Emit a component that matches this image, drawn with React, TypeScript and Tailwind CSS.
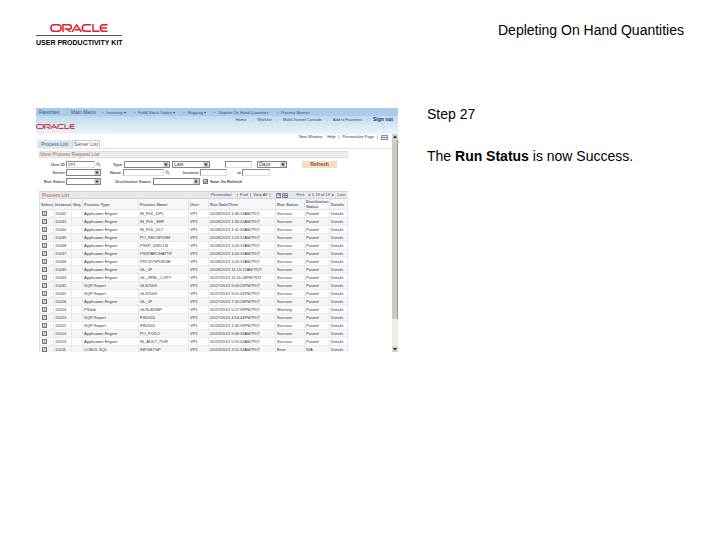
import React from 'react';

type Row = [string, string, string, string, string, string];

const AE = 'Application Engine';

const rows: Row[] = [
  ['15042', AE, 'IN_FUL_DPL', '05/28/2013 1:46:14AM PDT', 'Success', 'Posted'],
  ['15041', AE, 'IN_FUL_SHP', '05/28/2013 1:36:55AM PDT', 'Success', 'Posted'],
  ['15040', AE, 'IN_FUL_DLT', '05/28/2013 1:31:33AM PDT', 'Success', 'Posted'],
  ['15039', AE, 'PO_RECVPUSH', '05/28/2013 1:05:57AM PDT', 'Success', 'Posted'],
  ['15038', AE, 'PSXP_DIRCLN', '05/28/2013 1:00:19AM PDT', 'Success', 'Posted'],
  ['15037', AE, 'PSXPARCHATTR', '05/28/2013 1:00:19AM PDT', 'Success', 'Posted'],
  ['15036', AE, 'PRCSYSPURGE', '05/28/2013 1:00:19AM PDT', 'Success', 'Posted'],
  ['15035', AE, 'GL_JP', '05/28/2013 12:15:12AM PDT', 'Success', 'Posted'],
  ['15033', AE, 'GL_JRNL_COPY', '05/27/2013 11:15:18PM PDT', 'Success', 'Posted'],
  ['15032', 'SQR Report', 'GLS7009', '05/27/2013 9:04:25PM PDT', 'Success', 'Posted'],
  ['15031', 'SQR Report', 'GLS7009', '05/27/2013 9:01:31PM PDT', 'Success', 'Posted'],
  ['15026', AE, 'GL_JP', '05/27/2013 7:30:28PM PDT', 'Success', 'Posted'],
  ['15024', 'PSJob', 'GLNLEDMP', '05/27/2013 5:27:39PM PDT', 'Warning', 'Posted'],
  ['15023', 'SQR Report', 'FIN2001', '05/27/2013 4:54:44PM PDT', 'Success', 'Posted'],
  ['15022', 'SQR Report', 'FIN2001', '05/24/2013 1:46:59PM PDT', 'Success', 'Posted'],
  ['15014', AE, 'PO_PODO', '05/23/2013 9:46:34AM PDT', 'Success', 'Posted'],
  ['15013', AE, 'IN_ADDT_PUR', '05/23/2013 5:55:02AM PDT', 'Success', 'Posted'],
  ['15011', 'COBOL SQL', 'INPGSTGP', '05/23/2013 2:51:53AM PDT', 'Error', 'N/A'],
];

function OracleMark({ className }: { className: string }) {
  return (
    <svg viewBox="0 0 58 8" preserveAspectRatio="none" className={className} role="img" aria-label="Oracle" fill="none" stroke="currentColor" strokeWidth="1.5">
      <rect x="0.8" y="0.8" width="10.4" height="6.4" rx="3.2" />
      <path d="M13 8V0.8h6.2a2 2 0 0 1 0 4.2H14.5M17 5l3.6 3" />
      <path d="M22 8l4.6-7L31.500 8M25 5.800h4.500" />
      <path d="M41 0.8h-5.500a3.200 3.200 0 0 0 0 6.400H41" />
      <path d="M43 0v7.200h6.500" />
      <path d="M57.500 0.800h-4a3.200 3.200 0 0 0 0 6.400h4M51 4h6" />
    </svg>
  );
}

function Magnifier() {
  return (
    <svg viewBox="0 0 6 6" className="h-[5px] w-[5px] shrink-0" fill="none" stroke="#7d90aa" aria-hidden="true">
      <circle cx="2.400" cy="2.400" r="1.600" />
      <path d="M3.600 3.600L5.600 5.600" />
    </svg>
  );
}

function Field({ label, value = '', className }: { label: string; value?: string; className: string }) {
  return (
    <input
      type="text"
      aria-label={label}
      defaultValue={value}
      className={`h-[7px] shrink-0 border border-r-[#dddddd] border-b-[#dddddd] border-t-[#8c8c8c] border-l-[#8c8c8c] bg-white px-px text-[4px] leading-[5px] text-[#333333] ${className}`}
    />
  );
}

function Drop({ label, value = '', className }: { label: string; value?: string; className: string }) {
  return (
    <span className={`relative block h-[7px] shrink-0 ${className}`}>
      <select
        aria-label={label}
        className="block h-full w-full appearance-none border border-[#858585] bg-white px-px text-[5px] leading-[5px] text-[#333333]"
      >
        <option>{value}</option>
      </select>
      <svg viewBox="0 0 6 6" className="pointer-events-none absolute top-px right-px h-[5px] w-[6px]" aria-hidden="true">
        <rect width="6" height="6" fill="#c4c1b8" />
        <path d="M1 2h4L3 4.500z" fill="#222222" />
      </svg>
    </span>
  );
}

function Caption({ children, className }: { children: string; className: string }) {
  return <span className={`shrink-0 text-right font-bold whitespace-nowrap text-[#555555] ${className}`}>{children}</span>;
}

function NavBar() {
  const crumbs = ['Inventory ▾', 'Fulfill Stock Orders ▾', 'Shipping ▾', 'Deplete On Hand Quantities', 'Process Monitor'];
  return (
    <header className="h-[26px] bg-linear-to-b from-[#a9cae8] via-[#cfe1f2] to-[#edf4fa] text-[4px] leading-[7px] text-[#284a75]">
      <nav className="flex h-2 items-center bg-[#abcbe8] pl-[3px] whitespace-nowrap text-[#345579]">
        <a href="#favorites" className="w-8 text-[5px]">Favorites</a>
        <a href="#menu" className="w-[31px] text-[5px]">Main Menu</a>
        {crumbs.map((crumb) => (
          <span key={crumb} className="mr-2 flex gap-[3px]">
            <span>›</span>
            <a href="#crumb">{crumb}</a>
          </span>
        ))}
      </nav>
      <nav className="flex h-[7px] items-center justify-end gap-[5px] pr-[5px]">
        <a href="#home">Home</a>
        <span className="text-[#8fb0d0]">|</span>
        <a href="#worklist">Worklist</a>
        <span className="text-[#8fb0d0]">|</span>
        <a href="#console">MultiChannel Console</a>
        <span className="text-[#8fb0d0]">|</span>
        <a href="#add">Add to Favorites</a>
        <span className="text-[#8fb0d0]">|</span>
        <a href="#out" className="text-[5px] font-bold text-[#123a75]">Sign out</a>
      </nav>
      <OracleMark className="mt-px h-[5px] w-[39px] text-[#cf3346]" />
    </header>
  );
}

function Filters() {
  return (
    <form className="flex flex-col gap-px pt-[3px] text-[4px] leading-[7px]" onSubmit={(e) => e.preventDefault()}>
      <div className="flex items-center">
        <Caption className="w-[26px]">User ID</Caption>
        <Field label="User ID" value="VP1" className="mr-px ml-px w-[29px]" />
        <Magnifier />
        <Caption className="mr-0.5 w-[21px]">Type</Caption>
        <Drop label="Type" className="w-[46px]" />
        <Drop label="Period" value="Last" className="ml-0.5 w-[38px]" />
        <Field label="Amount" className="ml-[15px] w-[27px]" />
        <Drop label="Unit" value="Days" className="ml-[5px] w-[30px]" />
        <button type="submit" className="ml-[15px] h-[7px] w-[35px] bg-[#f9dfb8] text-[5px] leading-[7px] font-bold text-[#6a5b45]">
          Refresh
        </button>
      </div>
      <div className="flex items-center">
        <Caption className="w-[26px]">Server</Caption>
        <Drop label="Server" className="ml-px w-[35px]" />
        <Caption className="mr-0.5 w-5">Name</Caption>
        <Field label="Name" className="mr-px w-[41px]" />
        <Magnifier />
        <Caption className="w-[29px]">Instance</Caption>
        <Field label="Instance from" className="ml-px w-[27px]" />
        <Caption className="w-[14px]">to</Caption>
        <Field label="Instance to" className="ml-px w-[28px]" />
      </div>
      <div className="flex items-center pt-px">
        <Caption className="w-[26px]">Run Status</Caption>
        <Drop label="Run Status" className="ml-px w-[35px]" />
        <Caption className="w-[50px]">Distribution Status</Caption>
        <Drop label="Distribution Status" className="ml-0.5 w-[47px]" />
        <label className="ml-[3px] flex items-center gap-0.5 font-bold text-[#444444]">
          <span className="relative block h-[5px] w-[5px]">
            <input type="checkbox" defaultChecked className="block h-full w-full appearance-none border border-[#777777] bg-white" />
            <svg viewBox="0 0 5 5" className="pointer-events-none absolute inset-0 h-full w-full" fill="none" stroke="#222222" aria-hidden="true">
              <path d="M1 2.400L2.200 3.600L4.200 1.200" />
            </svg>
          </span>
          Save On Refresh
        </label>
      </div>
    </form>
  );
}

function ProcessTable() {
  const cell = 'h-2 overflow-hidden border-r border-b border-[#e9e9e9] p-0 pl-px whitespace-nowrap';
  const head = 'border-r border-b border-[#e4e4e4] p-0 pl-px font-bold';
  return (
    <section className="mt-[6px] w-[309px] border-l border-[#dcdcdc]">
      <div className="flex h-2 items-center border-y border-[#d4d4d4] bg-[#e9e9ea] pl-0.5 text-[4px] leading-[6px]">
        <h2 className="text-[5px] text-[#a85f50]">Process List</h2>
        <div className="ml-auto flex items-center gap-[5px] pr-[3px] text-[#444466]">
          <a href="#personalize" className="text-[#3a3a9a]">Personalize</a>
          <span>|&nbsp; Find &nbsp;|&nbsp; View All &nbsp;|</span>
          <svg viewBox="0 0 12 5" className="h-[5px] w-3" fill="none" stroke="#7a86a8" aria-hidden="true">
            <rect x="0.500" y="0.500" width="4" height="4" />
            <path d="M2 1.500h2v2M6.500 0.500h5v4h-5zM6.500 2.500h5M9 0.500v4" />
          </svg>
          <span className="ml-1">First &nbsp;&nbsp;◂&nbsp; 1-19 of 19 &nbsp;▸&nbsp;&nbsp; Last</span>
        </div>
      </div>
      <table className="w-full table-fixed border-separate border-spacing-0 text-[4px] leading-[7px] text-[#333333]">
        <colgroup>
          <col className="w-[14px]" />
          <col className="w-[18px]" />
          <col className="w-[11px]" />
          <col className="w-[56px]" />
          <col className="w-[50px]" />
          <col className="w-5" />
          <col className="w-[67px]" />
          <col className="w-[29px]" />
          <col className="w-[25px]" />
          <col className="w-[18px]" />
        </colgroup>
        <thead>
          <tr className="h-[11px] bg-[#f7f7f8] text-left text-[#4f6690]">
            {['Select', 'Instance', 'Seq.', 'Process Type', 'Process Name', 'User', 'Run Date/Time', 'Run Status'].map((h) => (
              <th key={h} className={`${head} whitespace-nowrap`}>{h}</th>
            ))}
            <th className={`${head} leading-[5px]`}>Distribution Status</th>
            <th className={head}>Details</th>
          </tr>
        </thead>
        <tbody>
          {rows.map(([id, type, name, date, run, dist]) => (
            <tr key={id} className="odd:bg-white even:bg-[#f6f6f6]">
              <td className={cell}>
                <input type="checkbox" aria-label={`Select ${id}`} className="ml-px block h-[5px] w-[5px] appearance-none border border-[#777777] bg-[#cccccc]" />
              </td>
              <td className={cell}>{id}</td>
              <td className={cell} />
              <td className={cell}>{type}</td>
              <td className={cell}>{name}</td>
              <td className={cell}>VP1</td>
              <td className={cell}>{date}</td>
              <td className={cell}>{run}</td>
              <td className={cell}>{dist}</td>
              <td className={cell}><a href="#details" className="text-[#28288f]">Details</a></td>
            </tr>
          ))}
        </tbody>
      </table>
    </section>
  );
}

function ScrollBar() {
  return (
    <div className="flex w-[6px] shrink-0 flex-col bg-[#eeeee8]" aria-hidden="true">
      <svg viewBox="0 0 6 6" className="h-[6px] w-[6px]">
        <rect width="6" height="6" fill="#d5d3ca" />
        <path d="M1 4h4L3 1.500z" fill="#222222" />
      </svg>
      <div className="h-[179px] border-r border-[#9a9a92] bg-[#cdccc3]" />
      <svg viewBox="0 0 6 6" className="mt-auto h-[6px] w-[6px]">
        <rect width="6" height="6" fill="#d5d3ca" />
        <path d="M1 2h4L3 4.500z" fill="#222222" />
      </svg>
    </div>
  );
}

function MonitorWindow() {
  return (
    <section className="w-[362px] shrink-0 overflow-hidden">
      <NavBar />
      <div className="flex h-[218px]">
        <div className="min-w-0 grow">
          <div className="flex h-[6px] items-center justify-end gap-[3px] pr-1 text-[4px] leading-[6px] text-[#333355]">
            <a href="#new" className="mr-0.5">New Window</a>
            <a href="#help">Help</a>
            <span>|</span>
            <a href="#personalize-page">Personalize Page</a>
            <span>|</span>
            <svg viewBox="0 0 7 5" className="h-[5px] w-[7px]" aria-hidden="true">
              <rect x="0.500" y="0.500" width="6" height="4" fill="#dde6f5" stroke="#8495bd" />
              <path d="M1 2.500h5" stroke="#8495bd" />
            </svg>
          </div>
          <div className="flex h-[9px] items-stretch border-b border-[#e2e8ee] pl-px text-[5px] leading-[8px]">
            <button type="button" className="w-[35px] rounded-t-[2px] bg-[#dbe7f1] whitespace-nowrap text-[#3f5673]">Process List</button>
            <button type="button" className="w-[28px] rounded-t-[2px] border border-b-0 border-[#c4ccd6] leading-[7px] whitespace-nowrap text-[#3f5673]">Server List</button>
          </div>
          <div className="pt-0.5 pl-[3px]">
            <h2 className="flex h-[7px] w-[309px] items-center border border-[#dedede] bg-[#ededed] text-[5px] leading-[5px] text-[#9c6a5e]">
              View Process Request List
            </h2>
            <Filters />
            <ProcessTable />
          </div>
        </div>
        <ScrollBar />
      </div>
    </section>
  );
}

export default function App() {
  return (
    <div className="min-h-screen bg-white px-9 pt-6 font-['Liberation_Sans',Arial,sans-serif] text-black">
      <header className="flex items-start justify-between">
        <div className="w-[86px]">
          <OracleMark className="mx-auto h-2 w-[58px] text-[#e0202c]" />
          <div className="mt-[3px] mb-0.5 h-px bg-[#555555]" />
          <p className="text-center text-[7px] leading-[9px] font-bold whitespace-nowrap">USER PRODUCTIVITY KIT</p>
        </div>
        <h1 className="-mt-0.5 text-sm leading-4">Depleting On Hand Quantities</h1>
      </header>
      <main className="flex items-start gap-[29px] pt-[61px]">
        <MonitorWindow />
        <div className="min-w-0 text-sm leading-3">
          <h2>Step 27</h2>
          <p className="mt-[30px]">
            The <strong>Run Status</strong> is now Success.
          </p>
        </div>
      </main>
    </div>
  );
}
